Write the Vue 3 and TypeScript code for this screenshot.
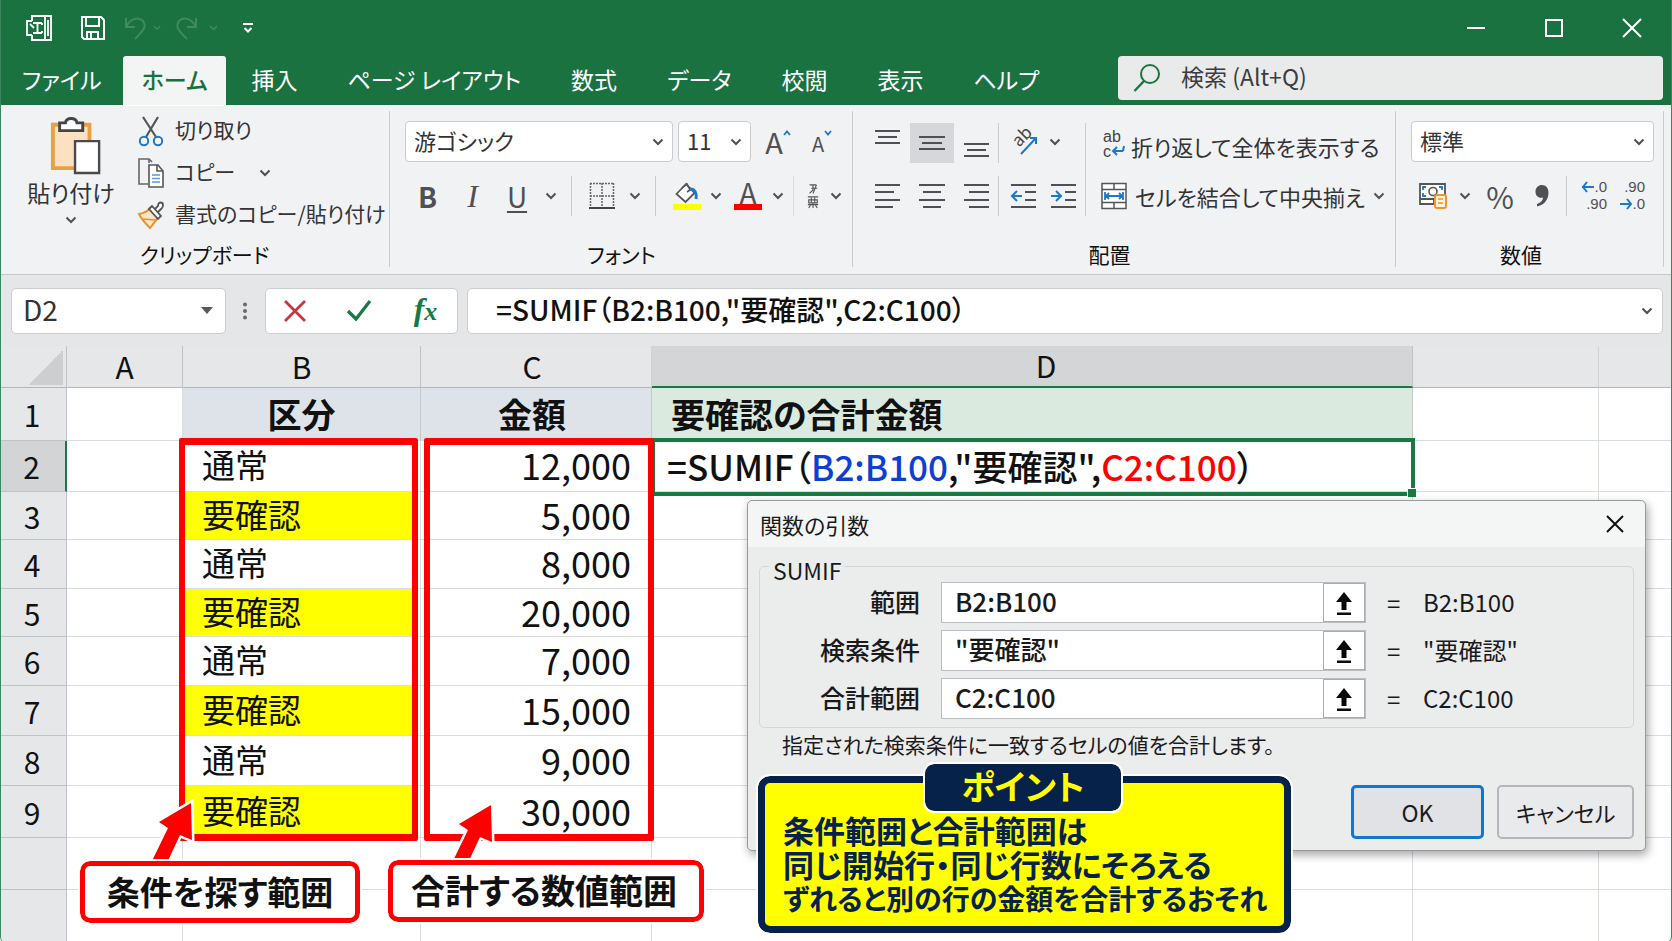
<script setup lang="ts">
import { ref } from 'vue'

interface SheetRow {
  no: string
  height: number
  kind?: string
  amount?: string
}

interface Argument {
  id: string
  label: string
  value: string
}

const tabs = ['ファイル', 'ホーム', '挿入', 'ページ レイアウト', '数式', 'データ', '校閲', '表示', 'ヘルプ']
const activeTab = ref('ホーム')

const rows: SheetRow[] = [
  { no: '3', height: 48, kind: '要確認', amount: '5,000' },
  { no: '4', height: 49, kind: '通常', amount: '8,000' },
  { no: '5', height: 48, kind: '要確認', amount: '20,000' },
  { no: '6', height: 49, kind: '通常', amount: '7,000' },
  { no: '7', height: 50, kind: '要確認', amount: '15,000' },
  { no: '8', height: 50, kind: '通常', amount: '9,000' },
  { no: '9', height: 52, kind: '要確認', amount: '30,000' },
  { no: '', height: 52 },
  { no: '', height: 52 },
]

const args = ref<Argument[]>([
  { id: 'arg-range', label: '範囲', value: 'B2:B100' },
  { id: 'arg-criteria', label: '検索条件', value: '"要確認"' },
  { id: 'arg-sum', label: '合計範囲', value: 'C2:C100' },
])

const cellName = ref('D2')
const formula = ref('=SUMIF（B2:B100,"要確認",C2:C100）')
const search = ref('')
</script>

<template>
  <div class="window">
    <svg class="defs" aria-hidden="true">
      <symbol id="chevron" viewBox="0 0 12 8">
        <path d="M1.5 1.5 6 6l4.500-4.500" fill="none" stroke="currentColor" stroke-width="2" />
      </symbol>
    </svg>

    <header class="top">
      <div class="titlebar">
        <div class="quick">
          <svg class="app-icon" viewBox="0 0 28 28" aria-hidden="true">
            <g fill="none" stroke="#fff" stroke-width="1.800">
              <path d="M7 7V2h19v24H7v-5M20 2v24M23 6v16" />
              <path d="M7 7H2v14h5" />
              <path d="M8 9h9M8 19h9M12.500 9v10M9 14l-4-4M17 9v2M17 17v2" />
            </g>
          </svg>
          <button class="qbtn save" aria-label="上書き保存">
            <svg width="26" height="26" viewBox="0 0 26 26">
              <g fill="none" stroke="#fff" stroke-width="2">
                <path d="M2 2h19l3 3v19H4l-2-2z" />
                <path d="M6 2v9h13V2M7 24v-7h11v7M11 18v5" />
              </g>
            </svg>
          </button>
          <button class="qbtn faint" aria-label="元に戻す">
            <svg width="24" height="26" viewBox="0 0 24 26">
              <path d="M2 3v9h9M2 12C6 4 14 1 19 6c5 6-2 12-8 18" fill="none" stroke="currentColor" stroke-width="2" />
            </svg>
            <svg class="mini" width="8" height="6"><use href="#chevron" /></svg>
          </button>
          <button class="qbtn faint redo" aria-label="やり直し">
            <svg width="24" height="26" viewBox="0 0 24 26">
              <path d="M22 3v9h-9M22 12C18 4 10 1 5 6c-5 6 2 12 8 18" fill="none" stroke="currentColor" stroke-width="2" />
            </svg>
            <svg class="mini" width="9" height="6"><use href="#chevron" /></svg>
          </button>
          <button class="qbtn" aria-label="クイック アクセスのカスタマイズ">
            <svg width="10" height="12" viewBox="0 0 10 12">
              <path d="M0 2h10M1.500 6 5 9.500 8.500 6" fill="none" stroke="#fff" stroke-width="2" />
            </svg>
          </button>
        </div>
        <div class="winbtns">
          <button aria-label="最小化">
            <svg width="20" height="20"><path d="M1 10h18" stroke="#fff" stroke-width="2" /></svg>
          </button>
          <button aria-label="最大化">
            <svg width="20" height="20"><path d="M2 2h16v16H2z" fill="none" stroke="#fff" stroke-width="2" /></svg>
          </button>
          <button aria-label="閉じる">
            <svg width="20" height="20"><path d="m1 1 18 18M19 1 1 19" stroke="#fff" stroke-width="2" /></svg>
          </button>
        </div>
      </div>
      <div class="tabrow">
        <nav class="tabs">
          <button
            v-for="tab in tabs"
            :key="tab"
            class="tab"
            :class="{ active: tab === activeTab }"
            @click="activeTab = tab"
          >{{ tab }}</button>
        </nav>
        <label class="search">
          <svg width="28" height="30" viewBox="0 0 28 30" aria-hidden="true">
            <circle cx="17" cy="11" r="9" fill="none" stroke="#1a7443" stroke-width="2" />
            <path d="M11 18 1.500 28" stroke="#1a7443" stroke-width="2.400" />
          </svg>
          <input v-model="search" type="text" placeholder="検索 (Alt+Q)" aria-label="検索" />
        </label>
      </div>
    </header>

    <section class="ribbon">
      <div class="group g-clip">
        <div class="body clip">
          <button class="paste">
            <svg width="52" height="57" viewBox="0 0 54 59" aria-hidden="true">
              <path d="M3 8h38v45H3z" fill="#fbe0c2" stroke="#e8a040" stroke-width="4" />
              <path d="M10 6h6c1-6 11-6 12 0h6v8H10z" fill="#fff" stroke="#444" stroke-width="3" />
              <path d="M26 25h25v33H26z" fill="#fff" stroke="#4a4a4e" stroke-width="2.500" />
            </svg>
            <span>貼り付け</span>
            <svg class="chev" width="12" height="8"><use href="#chevron" /></svg>
          </button>
          <div class="cliplist">
            <button>
              <svg width="26" height="30" viewBox="0 0 26 30" aria-hidden="true">
                <path d="M5 1 18 21M20 1 8 21" stroke="#555" stroke-width="2.200" />
                <g fill="none" stroke="#1e78c8" stroke-width="2">
                  <circle cx="6" cy="25" r="4.200" />
                  <circle cx="20" cy="25" r="4.200" />
                </g>
              </svg>
              <span>切り取り</span>
            </button>
            <button>
              <svg width="26" height="30" viewBox="0 0 26 30" aria-hidden="true">
                <path d="M10 26H1V1h10l3 3M11 1v4" fill="none" stroke="#666" stroke-width="1.600" />
                <path d="M11 7h9l5 6v16H11z" fill="#fff" stroke="#555" stroke-width="1.600" />
                <path d="M19 7v6h6" fill="none" stroke="#555" stroke-width="1.600" />
                <path d="M14 17h8M14 20.500h8M14 24h8" stroke="#5d9bd5" stroke-width="1.600" />
              </svg>
              <span>コピー</span>
              <svg class="chev far" width="12" height="8"><use href="#chevron" /></svg>
            </button>
            <button>
              <svg width="26" height="28" viewBox="0 0 26 28" aria-hidden="true">
                <path d="M1 13c6-1 9-3 11-6l8 9c-2 4-5 7-8 11C8 23 4 19 1 13z" fill="#fde7c8" stroke="#e8922c" stroke-width="2" />
                <path d="M5 18 17 19" stroke="#e8922c" stroke-width="1.600" />
                <path d="m11 8 3-3 9 10-3 3zM17 8l3-3c0-5 5-4 5-1s-1 3-2 4l-3 3" fill="#fff" stroke="#555" stroke-width="1.800" />
              </svg>
              <span>書式のコピー/貼り付け</span>
            </button>
          </div>
        </div>
        <h2>クリップボード</h2>
      </div>

      <div class="group g-font">
        <div class="body two">
          <div class="fontrow">
            <div class="pick pick-font">
              <select aria-label="フォント名"><option>游ゴシック</option></select>
              <svg width="12" height="8"><use href="#chevron" /></svg>
            </div>
            <div class="pick pick-size">
              <select aria-label="フォント サイズ"><option>11</option></select>
              <svg width="12" height="8"><use href="#chevron" /></svg>
            </div>
            <button class="grow" aria-label="フォント サイズの拡大">
              A<svg width="8" height="6" viewBox="0 0 8 6"><path d="M1 5l3-3.500L7 5" fill="none" stroke="#1e78c8" stroke-width="1.800" /></svg>
            </button>
            <button class="shrink" aria-label="フォント サイズの縮小">
              A<svg width="8" height="6" viewBox="0 0 8 6"><path d="M1 1l3 3.500L7 1" fill="none" stroke="#1e78c8" stroke-width="1.800" /></svg>
            </button>
          </div>
          <div class="stylerow">
            <button class="bold">B</button>
            <button class="italic">I</button>
            <button class="under">U</button>
            <button aria-label="下線の種類"><svg class="chev" width="12" height="8"><use href="#chevron" /></svg></button>
            <i class="sep"></i>
            <button aria-label="罫線">
              <svg width="26" height="28" viewBox="0 0 26 28">
                <path d="M1 1.500h24M1 14h24M1.500 1v24M13 1v24M24.500 1v24" stroke="#666" stroke-width="1.500" stroke-dasharray="2 1" />
                <path d="M0 26h26" stroke="#444" stroke-width="2" />
              </svg>
            </button>
            <button aria-label="罫線の種類"><svg class="chev" width="12" height="8"><use href="#chevron" /></svg></button>
            <i class="sep"></i>
            <button aria-label="塗りつぶしの色">
              <svg width="28" height="30" viewBox="0 0 28 30">
                <path d="M3.500 13 13 3l8.500 9-9 9z" fill="#fff" stroke="#555" stroke-width="1.800" />
                <path d="M9 7 14 3l3 6-3 2" fill="none" stroke="#555" stroke-width="1.600" />
                <path d="M17 8c5 0 7 4 6 10" fill="none" stroke="#1e78c8" stroke-width="2.800" />
                <path d="M0 23h28v6H0z" fill="#ff0" />
              </svg>
            </button>
            <button aria-label="塗りつぶしの色を選択"><svg class="chev" width="12" height="8"><use href="#chevron" /></svg></button>
            <button class="fcolor" aria-label="フォントの色">A</button>
            <button aria-label="フォントの色を選択"><svg class="chev" width="12" height="8"><use href="#chevron" /></svg></button>
            <i class="sep light"></i>
            <button aria-label="ふりがな">
              <svg width="12" height="28" viewBox="0 0 14 30">
                <g fill="none" stroke="#555" stroke-width="1.300">
                  <path d="M3 2h8M11 2 7 12M5 6h7M7 2v6l-4 4" />
                  <path d="M1 16h12M2 19.500h10v3.500H2zM5 17v6M9 17v6M1 25h12M7 23v6M4 26l-2 3M10 26l2 3" />
                </g>
              </svg>
            </button>
            <button aria-label="ふりがなの設定"><svg class="chev" width="12" height="8"><use href="#chevron" /></svg></button>
          </div>
        </div>
        <h2>フォント</h2>
      </div>

      <div class="group g-align">
        <div class="body align">
          <div class="aligngrid">
            <button aria-label="上揃え"><svg class="up" width="26" height="16"><path d="M0 2h25M3 8h19M0 14h25" /></svg></button>
            <button class="on" aria-label="上下中央揃え"><svg width="26" height="16"><path d="M0 2h26M3 8h20M0 14h26" /></svg></button>
            <button aria-label="下揃え"><svg class="down" width="26" height="16"><path d="M1 2h25M4 8h19M1 14h25" /></svg></button>
            <i class="sep"></i>
            <button aria-label="方向">
              <svg class="free" width="28" height="28" viewBox="0 0 28 28">
                <text x="-2" y="9" transform="translate(4 12) rotate(-45)" font-size="17" fill="#444">ab</text>
                <path d="M11 26 26 10M20 10h6v6" fill="none" />
              </svg>
            </button>
            <button class="left" aria-label="方向の種類"><svg class="chev" width="12" height="8"><use href="#chevron" /></svg></button>

            <button aria-label="左揃え"><svg width="26" height="26"><path d="M0 2h25M0 9h19M0 17h25M0 24h18" /></svg></button>
            <button aria-label="中央揃え"><svg width="26" height="26"><path d="M0 2h26M4 9h18M0 17h26M4 24h18" /></svg></button>
            <button aria-label="右揃え"><svg width="26" height="26"><path d="M1 2h25M6 9h20M1 17h25M6 24h20" /></svg></button>
            <i class="sep"></i>
            <button aria-label="インデントを減らす">
              <svg width="26" height="26"><path d="M0 2h25M14 9h11M14 17h11M0 24h25" /><path class="blue" d="M1 13h10M6 8l-5 5 5 5" /></svg>
            </button>
            <button aria-label="インデントを増やす">
              <svg width="26" height="26"><path d="M0 2h25M14 9h11M14 17h11M0 24h25" /><path class="blue" d="M0 13h10M5 8l5 5-5 5" /></svg>
            </button>
          </div>
          <div class="alignright">
            <button>
              <svg class="wrap" width="22" height="28" viewBox="0 0 22 28" aria-hidden="true">
                <text x="0" y="12" font-size="16">ab</text>
                <text x="0" y="27" font-size="16">c</text>
                <path d="M10 21h10M14 17l-4 4 4 4M20 21l1-5" fill="none" stroke="#1e78c8" stroke-width="2" />
              </svg>
              <span>折り返して全体を表示する</span>
            </button>
            <button>
              <svg width="26" height="28" viewBox="0 0 26 28" aria-hidden="true">
                <path d="M1 1.500h24v25H1zM1 7.500h24M1 20.500h24M13 1.500v6M13 20.500v6" fill="#fff" stroke="#555" stroke-width="1.500" />
                <path d="M4 14h18M4 10v8M22 10v8M8 11l-3 3 3 3M18 11l3 3-3 3" fill="none" stroke="#1e78c8" stroke-width="1.800" />
              </svg>
              <span>セルを結合して中央揃え</span>
              <svg class="chev" width="12" height="8"><use href="#chevron" /></svg>
            </button>
          </div>
        </div>
        <h2>配置</h2>
      </div>

      <div class="group g-num">
        <div class="body two">
          <div class="fontrow">
            <div class="pick pick-num">
              <select aria-label="表示形式"><option>標準</option></select>
              <svg width="12" height="8"><use href="#chevron" /></svg>
            </div>
          </div>
          <div class="numrow">
            <button aria-label="通貨表示形式">
              <svg width="28" height="28" viewBox="0 0 28 28">
                <path d="M1 2h25v15H1zM1 17v5h14v-4" fill="#fff" stroke="#555" stroke-width="1.800" />
                <path d="M7 5H4v3M4 11v3h3M20 5h3v3" fill="none" stroke="#1e78c8" stroke-width="1.800" />
                <circle cx="14" cy="9.500" r="4" fill="none" stroke="#555" stroke-width="1.600" />
                <rect x="16" y="13" width="11" height="13" rx="2" fill="#fff3dc" stroke="#f0962e" stroke-width="2" />
                <path d="M19 17h5M19 21h5" stroke="#f0962e" stroke-width="1.600" />
              </svg>
            </button>
            <button aria-label="通貨の種類"><svg class="chev" width="12" height="8"><use href="#chevron" /></svg></button>
            <button class="pct">%</button>
            <button class="comma" aria-label="桁区切りスタイル">
              <svg width="14" height="24" viewBox="0 0 14 24"><path d="M7 1c4 0 6.500 3 6.500 7.500C13.500 16 9 21 2 22.500v-2.500c4-1.500 6-3.500 6-6.500-4 1-7.500-1-7.500-6C.5 3.500 3.500 1 7 1z" fill="#505054" /></svg>
            </button>
            <i class="sep"></i>
            <button class="dec" aria-label="小数点以下の表示桁数を増やす">
              <span><svg width="12" height="12"><path d="M0 6h12M5 1 1 6l4 5" /></svg>.0</span>
              <span>.90</span>
            </button>
            <button class="dec" aria-label="小数点以下の表示桁数を減らす">
              <span>.90</span>
              <span><svg width="12" height="12"><path d="M0 6h11M7 1l4 5-4 5" /></svg>.0</span>
            </button>
          </div>
        </div>
        <h2>数値</h2>
      </div>
    </section>

    <section class="fbar">
      <label class="namebox">
        <input v-model="cellName" type="text" aria-label="名前ボックス" />
        <svg width="12" height="8"><path d="M0 0h12L6 7z" fill="#5a5a5e" /></svg>
      </label>
      <svg class="dots" width="6" height="18" aria-hidden="true">
        <circle cx="3" cy="2.500" r="2" /><circle cx="3" cy="9" r="2" /><circle cx="3" cy="15.500" r="2" />
      </svg>
      <div class="fxbox">
        <button aria-label="キャンセル">
          <svg width="24" height="24"><path d="m2 2 20 20M22 2 2 22" stroke="#bf3a3f" stroke-width="2.800" /></svg>
        </button>
        <button aria-label="入力">
          <svg width="26" height="24"><path d="m2 12 8 8L24 2" fill="none" stroke="#177a43" stroke-width="3.200" /></svg>
        </button>
        <button class="fx" aria-label="関数の挿入"><b>f</b><small>x</small></button>
      </div>
      <label class="formula">
        <input v-model="formula" type="text" aria-label="数式バー" />
        <svg width="12" height="8"><use href="#chevron" /></svg>
      </label>
    </section>

    <main class="sheet">
      <table>
        <colgroup>
          <col class="c-no" /><col class="c-a" /><col class="c-b" /><col class="c-c" /><col class="c-d" /><col class="c-e" /><col />
        </colgroup>
        <thead>
          <tr>
            <th class="corner" aria-label="すべて選択"></th>
            <th>A</th>
            <th>B</th>
            <th class="plain cc">C</th>
            <th class="sel">D</th>
            <th class="plain"></th>
            <th></th>
          </tr>
        </thead>
        <tbody>
          <tr class="r1">
            <th>1</th>
            <td></td>
            <td class="head">区分</td>
            <td class="head cc">金額</td>
            <td class="head result">要確認の合計金額</td>
            <td></td>
            <td></td>
          </tr>
          <tr class="r2">
            <th class="sel">2</th>
            <td></td>
            <td class="kind">通常</td>
            <td class="amount">12,000</td>
            <td class="editing">=SUMIF（<span class="ref-blue">B2:B100</span>,"要確認",<span class="ref-red">C2:C100</span>）</td>
            <td></td>
            <td></td>
          </tr>
          <tr v-for="(row, i) in rows" :key="i" :style="{ height: row.height + 'px' }">
            <th>{{ row.no }}</th>
            <td></td>
            <td class="kind" :class="{ mark: row.kind === '要確認' }">{{ row.kind }}</td>
            <td class="amount">{{ row.amount }}</td>
            <td></td>
            <td></td>
            <td></td>
          </tr>
        </tbody>
      </table>

      <div class="selection"><i></i></div>
      <div class="frame frame-b"></div>
      <div class="frame frame-c"></div>
      <svg class="arrow arrow-b" width="50" height="72" viewBox="0 0 50 72" aria-hidden="true">
        <path d="m43 6-32 19 9 6L2 68h16l14-30 12 5z" />
      </svg>
      <svg class="arrow arrow-c" width="50" height="72" viewBox="0 0 50 72" aria-hidden="true">
        <path d="m43 6-32 19 9 6L2 68h16l14-30 12 5z" />
      </svg>
      <p class="callout callout-b">条件を探す範囲</p>
      <p class="callout callout-c">合計する数値範囲</p>

      <section class="dialog" role="dialog" aria-labelledby="dlg-title">
        <header>
          <h3 id="dlg-title">関数の引数</h3>
          <button aria-label="閉じる">
            <svg width="18" height="18"><path d="m1 1 16 16M17 1 1 17" stroke="#111" stroke-width="2" /></svg>
          </button>
        </header>
        <fieldset>
          <legend>SUMIF</legend>
          <div v-for="arg in args" :key="arg.id" class="arg">
            <label :for="arg.id">{{ arg.label }}</label>
            <div class="refbox">
              <input :id="arg.id" v-model="arg.value" type="text" />
              <button :aria-label="arg.label + 'をシートで選択'">
                <svg width="18" height="24"><path d="M9 1 17 11h-5.500v8h-5v-8H1zM2 21.500h14v2.500H2z" fill="#0a0a0a" /></svg>
              </button>
            </div>
            <span class="eq">=</span>
            <output :for="arg.id">{{ arg.value }}</output>
          </div>
        </fieldset>
        <p>指定された検索条件に一致するセルの値を合計します。</p>
        <div class="actions">
          <button class="ok">OK</button>
          <button>キャンセル</button>
        </div>
      </section>

      <aside class="point">
        <h4>ポイント</h4>
        <p class="lead">条件範囲と合計範囲は<br />同じ開始行・同じ行数にそろえる</p>
        <p>ずれると別の行の金額を合計するおそれ</p>
      </aside>
    </main>
  </div>
</template>

<style>
html,
body,
#app {
  margin: 0;
  min-height: 100%;
}
</style>

<style scoped>
.window,
.window * {
  box-sizing: border-box;
}
.window {
  font-family: "Noto Sans CJK JP", "Noto Sans", sans-serif;
  font-feature-settings: "palt";
  font-size: 22px;
  color: #333336;
  min-height: 100vh;
  display: flex;
  flex-direction: column;
  border: 1px solid #3b8762;
  border-top: 0;
  border-radius: 0 0 6px 6px;
  background: #fff;
  overflow: hidden;
}
.defs {
  position: absolute;
  width: 0;
  height: 0;
}
button,
input,
select {
  font: inherit;
  font-feature-settings: inherit;
  color: inherit;
  background: none;
  border: 0;
  margin: 0;
  padding: 0;
  border-radius: 0;
  outline: 0;
}
button {
  display: flex;
  align-items: center;
  justify-content: center;
  white-space: nowrap;
}
h2,
h3,
h4,
p {
  margin: 0;
  font-weight: 400;
}
svg {
  display: block;
  flex: none;
  overflow: visible;
}
.chev {
  color: #505054;
}

/* title bar and tabs */
.top {
  background: #1b7241;
  color: #fff;
}
.titlebar {
  display: flex;
  justify-content: space-between;
  height: 56px;
}
.quick {
  display: flex;
  align-items: center;
  padding-left: 24px;
}
.app-icon {
  width: 28px;
  height: 28px;
  margin-right: 27px;
}
.qbtn {
  height: 30px;
}
.save {
  margin-right: 18px;
}
.faint {
  color: #3f8a60;
  gap: 5px;
  margin-right: 13px;
}
.redo {
  gap: 11px;
  margin-right: 25px;
}
.winbtns {
  display: flex;
}
.winbtns button {
  width: 78px;
}
.tabrow {
  display: flex;
  justify-content: space-between;
  height: 49px;
  padding-right: 8px;
}
.tabs {
  display: flex;
  color: #fff;
}
.tab {
  height: 49px;
  padding: 0 25px 4px;
  font-size: 23px;
  line-height: 42px;
}
.tab:first-child {
  padding-left: 21px;
  padding-right: 21px;
}
.tab.active {
  background: #f3f4f4;
  color: #16713f;
  font-weight: 500;
  border-radius: 3px 3px 0 0;
  padding: 0 19px 4px;
}
.search {
  display: flex;
  align-items: center;
  width: 545px;
  height: 44px;
  padding-left: 15px;
  gap: 20px;
  background: #e9ebea;
  border-radius: 4px;
}
.search input {
  flex: 1;
  min-width: 0;
  padding-bottom: 4px;
  font-size: 23px;
  color: #333;
}
.search input::placeholder {
  color: #3c3c3f;
  opacity: 1;
}

/* ribbon */
.ribbon {
  display: flex;
  background: #f1f2f3;
  border-top: 1px solid #fff;
  border-bottom: 1px solid #c6c8ca;
  padding-right: 7px;
}
.group {
  position: relative;
  min-width: 0;
  padding-top: 5px;
  height: 168px;
}
.group::after {
  content: "";
  position: absolute;
  right: 0;
  top: 5px;
  bottom: 7px;
  width: 1px;
  background: #c9cbcf;
}
.g-clip { flex: 389 1 0; }
.g-font { flex: 463 1 0; }
.g-align { flex: 543 1 0; }
.g-num { flex: 268 1 0; }
.group h2 {
  margin-top: 3px;
  font-size: 21px;
  line-height: 32px;
  text-align: center;
  color: #111;
}
.g-clip h2 {
  padding-left: 18px;
}
.g-align h2 {
  padding-right: 30px;
}
.g-num h2 {
  padding-right: 18px;
}
.body {
  height: 124px;
}
.clip {
  display: flex;
  padding-left: 25px;
  gap: 22px;
}
.paste {
  flex: none;
  flex-direction: column;
  justify-content: flex-start;
  width: 90px;
  padding-top: 6px;
  font-size: 23px;
  line-height: 36px;
}
.paste svg:first-child {
  margin-left: 9px;
}
.paste .chev {
  margin-top: 6px;
}
.cliplist {
  display: flex;
  flex-direction: column;
  gap: 2px;
}
.cliplist button {
  justify-content: flex-start;
  height: 40px;
  gap: 11px;
  font-size: 21px;
}
.cliplist span {
  padding-bottom: 4px;
}
.cliplist .far {
  margin-left: 13px;
}
.two {
  display: flex;
  flex-direction: column;
  gap: 14px;
  padding-top: 10px;
  padding-left: 15px;
}
.fontrow {
  display: flex;
  height: 41px;
}
.pick {
  position: relative;
  height: 41px;
  background: #fff;
  border: 1px solid #c9cbd0;
  border-radius: 4px;
  margin-right: 5px;
}
.pick select {
  appearance: none;
  width: 100%;
  height: 100%;
  padding: 0 30px 4px 8px;
}
.pick svg {
  position: absolute;
  right: 8px;
  top: 16px;
  color: #505054;
  pointer-events: none;
}
.pick-font { width: 268px; }
.pick-size { width: 73px; }
.pick-num { width: 243px; }
.grow,
.shrink {
  align-items: flex-start;
  color: #505054;
}
.grow {
  width: 44px;
  font-size: 29px;
  line-height: 40px;
}
.shrink {
  width: 44px;
  font-size: 20px;
  line-height: 46px;
}
.grow svg,
.shrink svg {
  margin-top: 9px;
}
.stylerow,
.numrow {
  display: grid;
  height: 40px;
}
.stylerow {
  grid-template-columns: 45px 45px 44px 24px 16px 46px 20px 20px 43px 16px 48px 12px 18px 22px 24px;
}
.sep {
  width: 1px;
  background: #c9cbcf;
  justify-self: center;
}
.light {
  background: #dcdde0;
}
.bold,
.italic,
.under,
.fcolor {
  color: #505054;
  font-size: 28px;
  line-height: 40px;
}
.bold {
  font-weight: 700;
}
.italic {
  font-family: "Liberation Serif", serif;
  font-size: 32px;
  font-style: italic;
}
.under {
  text-decoration: underline;
  text-decoration-thickness: 2px;
  text-underline-offset: 3px;
}
.fcolor {
  align-self: center;
  justify-self: center;
  width: 28px;
  height: 28px;
  line-height: 20px;
  align-items: flex-start;
  border-bottom: 6px solid #f00;
}
.align {
  display: flex;
}
.aligngrid {
  display: grid;
  flex: none;
  grid-template-columns: 44px 44px 43px 2px 50px 30px;
  grid-template-rows: 40px 40px;
  row-gap: 13px;
  padding: 12px 6px 0 13px;
}
.aligngrid path {
  stroke: #505054;
  stroke-width: 2;
  fill: none;
}
.aligngrid .free path,
.aligngrid path.blue {
  stroke: #1e78c8;
}
.aligngrid .chev,
.free {
  margin-bottom: 2px;
}
.aligngrid .up {
  margin-bottom: 12px;
}
.aligngrid .down {
  margin-top: 14px;
}
.on {
  background: #d6d7da;
}
.left {
  justify-content: flex-start;
}
.alignright {
  display: flex;
  flex-direction: column;
  gap: 13px;
  margin-top: 12px;
  height: 93px;
  padding-left: 15px;
  border-left: 1px solid #c9cbcf;
}
.alignright button {
  height: 40px;
  justify-content: flex-start;
  gap: 8px;
  font-size: 22px;
  padding-top: 5px;
}
.alignright button + button {
  padding-top: 0;
}
.wrap {
  margin: 0 0 4px 2px;
  font-family: "Liberation Sans", sans-serif;
  fill: #444;
}
.wrap + span {
  margin-left: -2px;
}
.numrow {
  grid-template-columns: 44px 20px 50px 34px 14px 42px 34px;
}
.pct {
  font-size: 30px;
  line-height: 40px;
  color: #505054;
}
.dec {
  flex-direction: column;
  font-family: "Liberation Sans", sans-serif;
  font-size: 15px;
  line-height: 17px;
  color: #505054;
  align-items: flex-end;
  padding: 0 8px 2px 0;
}
.dec + .dec {
  padding-right: 4px;
}
.dec span {
  display: flex;
  align-items: center;
}
.dec path {
  fill: none;
  stroke: #1e78c8;
  stroke-width: 2;
}

/* formula bar */
.fbar {
  display: flex;
  align-items: center;
  height: 71px;
  padding: 0 8px 0 10px;
  background: #e5e6e8;
}
.namebox,
.fxbox,
.formula {
  height: 46px;
  background: #fff;
  border: 1px solid #cbcdd1;
  border-radius: 5px;
}
.namebox,
.formula {
  display: flex;
  align-items: center;
}
.namebox {
  width: 215px;
  padding: 0 12px 0 11px;
}
.namebox input,
.formula input {
  flex: 1;
  min-width: 0;
  padding-bottom: 3px;
  font-size: 28px;
}
.dots {
  fill: #6a6a6e;
  margin: 0 17px 0 16px;
}
.fxbox {
  display: grid;
  grid-template-columns: 58px 70px 1fr;
  width: 193px;
  margin-right: 9px;
}
.fx {
  font-family: "Liberation Serif", serif;
  font-style: italic;
  color: #177a43;
  align-items: baseline;
}
.fx b {
  font-size: 32px;
  line-height: 40px;
}
.fx small {
  font-size: 26px;
  font-weight: 700;
}
.formula {
  flex: 1;
  padding: 0 9px 0 28px;
  color: #505054;
}
.formula input {
  color: #111;
  font-weight: 500;
}

/* sheet */
.sheet {
  position: relative;
  flex: 1;
}
table {
  width: 100%;
  table-layout: fixed;
  border-collapse: separate;
  border-spacing: 0;
  color: #111;
}
.c-no { width: 66px; }
.c-a { width: 116px; }
.c-b { width: 238px; }
.c-c { width: 231px; }
.c-d { width: 761px; }
.c-e { width: 186px; }
th,
td {
  padding: 0;
  border-right: 1px solid #d9dce0;
  border-bottom: 1px solid #d9dce0;
  line-height: 40px;
}
tr > :last-child {
  border-right: 0;
}
th {
  font-size: 30px;
  font-weight: 400;
  background: #e6e7e9;
  border-color: #bfc2c6;
}
tbody th {
  padding-right: 3px;
}
thead tr { height: 42px; }
.r1 { height: 53px; }
.r2 { height: 51px; }
thead th {
  line-height: 38px;
  padding-bottom: 2px;
  border-bottom-color: #b4b7ba;
}
thead .plain {
  border-right-color: #d0d2d5;
}
.cc {
  padding-right: 8px;
}
thead .sel {
  background: #d4d5d7;
  border-bottom: 2px solid #177a43;
  padding-left: 28px;
}
tbody .sel {
  background: #d2d4d6;
  border-right: 2px solid #177a43;
}
.corner {
  background: linear-gradient(135deg, #e6e7e9 50%, #cdced0 50%) 27px 4px / 35px 35px no-repeat #e6e7e9;
}
.head {
  font-size: 34px;
  font-weight: 700;
  text-align: center;
  background: #dee2e9;
  border-right-color: #c5c9ce;
}
.result {
  text-align: left;
  padding-left: 19px;
  background: #dbeade;
}
.kind {
  font-size: 33px;
  padding: 0 0 4px 19px;
}
.mark {
  background: linear-gradient(#ff0, #ff0) 0 0 / calc(100% - 5px) 100% no-repeat;
}
.amount {
  font-size: 36px;
  text-align: right;
  padding: 0 20px 4px 0;
}
.editing {
  font-size: 35px;
  font-weight: 500;
  padding-left: 15px;
  white-space: nowrap;
}
.ref-blue { color: #0d3fd0; }
.ref-red { color: #f00; }

.selection {
  position: absolute;
  left: 650px;
  top: 92px;
  width: 764px;
  height: 58px;
  border: 4px solid #177a43;
}
.selection i {
  position: absolute;
  right: -5px;
  bottom: -5px;
  width: 9px;
  height: 9px;
  background: #177a43;
  border: solid #fff;
  border-width: 1px 0 0 1px;
}
.frame {
  position: absolute;
  top: 92px;
  height: 403px;
  border: solid #f00;
  border-width: 7px 6px;
  border-radius: 2px;
}
.frame-b {
  left: 178px;
  width: 239px;
}
.frame-c {
  left: 423px;
  width: 230px;
}
.arrow {
  position: absolute;
}
.arrow path {
  fill: #f00;
  stroke: #fff;
  stroke-width: 5;
  paint-order: stroke;
}
.arrow-b {
  left: 147px;
  top: 451px;
}
.arrow-c {
  left: 447px;
  top: 453px;
}
.callout {
  position: absolute;
  height: 62px;
  border: 5px solid #f00;
  border-radius: 10px;
  background: #fff;
  outline: 2px solid #fff;
  font-weight: 700;
  line-height: 50px;
  text-align: center;
  white-space: nowrap;
  color: #111;
}
.callout-b {
  left: 79px;
  top: 515px;
  width: 280px;
  font-size: 33px;
}
.callout-c {
  left: 387px;
  top: 514px;
  width: 316px;
  padding-right: 4px;
  font-size: 34px;
}

/* function arguments dialog */
.dialog {
  position: absolute;
  left: 746px;
  top: 154px;
  width: 899px;
  height: 351px;
  background: #ebecec;
  border: 1px solid #97999c;
  border-radius: 5px;
  box-shadow: 2px 4px 10px rgba(0, 0, 0, 0.35);
  color: #1a1a1c;
}
.dialog header {
  display: flex;
  align-items: center;
  justify-content: space-between;
  height: 46px;
  padding: 0 21px 0 12px;
  background: #f4f5f5;
  border-radius: 5px 5px 0 0;
}
.dialog h3 {
  font-size: 22px;
}
fieldset {
  margin: 4px 11px 0;
  padding: 0 0 8px;
  border: 1px solid #d3d6d9;
  border-radius: 5px;
  display: flex;
  flex-direction: column;
  gap: 7px;
}
legend {
  margin-left: 9px;
  padding: 0 4px;
  height: 31px;
  font-size: 23px;
  line-height: 38px;
}
.arg {
  display: flex;
  align-items: center;
  height: 41px;
}
.arg label {
  width: 160px;
  padding-bottom: 3px;
  text-align: right;
  font-size: 25px;
  font-weight: 500;
}
.refbox {
  display: flex;
  width: 425px;
  height: 41px;
  margin-left: 21px;
  background: #fff;
  border: 1px solid #b9bcc2;
}
.refbox input {
  flex: 1;
  min-width: 0;
  padding: 0 13px 4px;
  font-size: 26px;
  font-weight: 500;
}
.refbox button {
  width: 42px;
  border: 1px solid #a9acb2;
}
.eq {
  width: 57px;
  padding-left: 21px;
  font-size: 24px;
}
.arg output {
  padding-bottom: 2px;
  font-size: 24px;
}
.dialog > p {
  padding-left: 34px;
  font-size: 21px;
  line-height: 32px;
}
.actions {
  display: flex;
  justify-content: flex-end;
  gap: 13px;
  margin: 25px 11px 0;
}
.actions button {
  width: 137px;
  height: 54px;
  border: 2px solid #b3b6ba;
  border-radius: 5px;
  background: #e9eaeb;
  font-size: 22px;
}
.actions .ok {
  width: 133px;
  border: 3px solid #0a78d6;
  background: #e0e2e6;
  font-size: 23px;
}

/* point note */
.point {
  position: absolute;
  left: 757px;
  top: 430px;
  width: 533px;
  height: 157px;
  padding: 30px 0 0 18px;
  background: #ff0;
  border: 7px solid #06224a;
  border-radius: 12px;
  outline: 2px solid #fff;
  color: #06224a;
}
.point h4 {
  position: absolute;
  left: 160px;
  top: -19px;
  width: 196px;
  height: 47px;
  background: #06224a;
  border-radius: 9px;
  outline: 2px solid #fff;
  color: #ff0;
  font-size: 34px;
  font-weight: 700;
  line-height: 44px;
  text-align: center;
}
.point p {
  font-size: 28px;
  font-weight: 700;
  line-height: 35px;
  white-space: nowrap;
}
.point .lead {
  font-size: 31px;
  line-height: 34px;
}
</style>
